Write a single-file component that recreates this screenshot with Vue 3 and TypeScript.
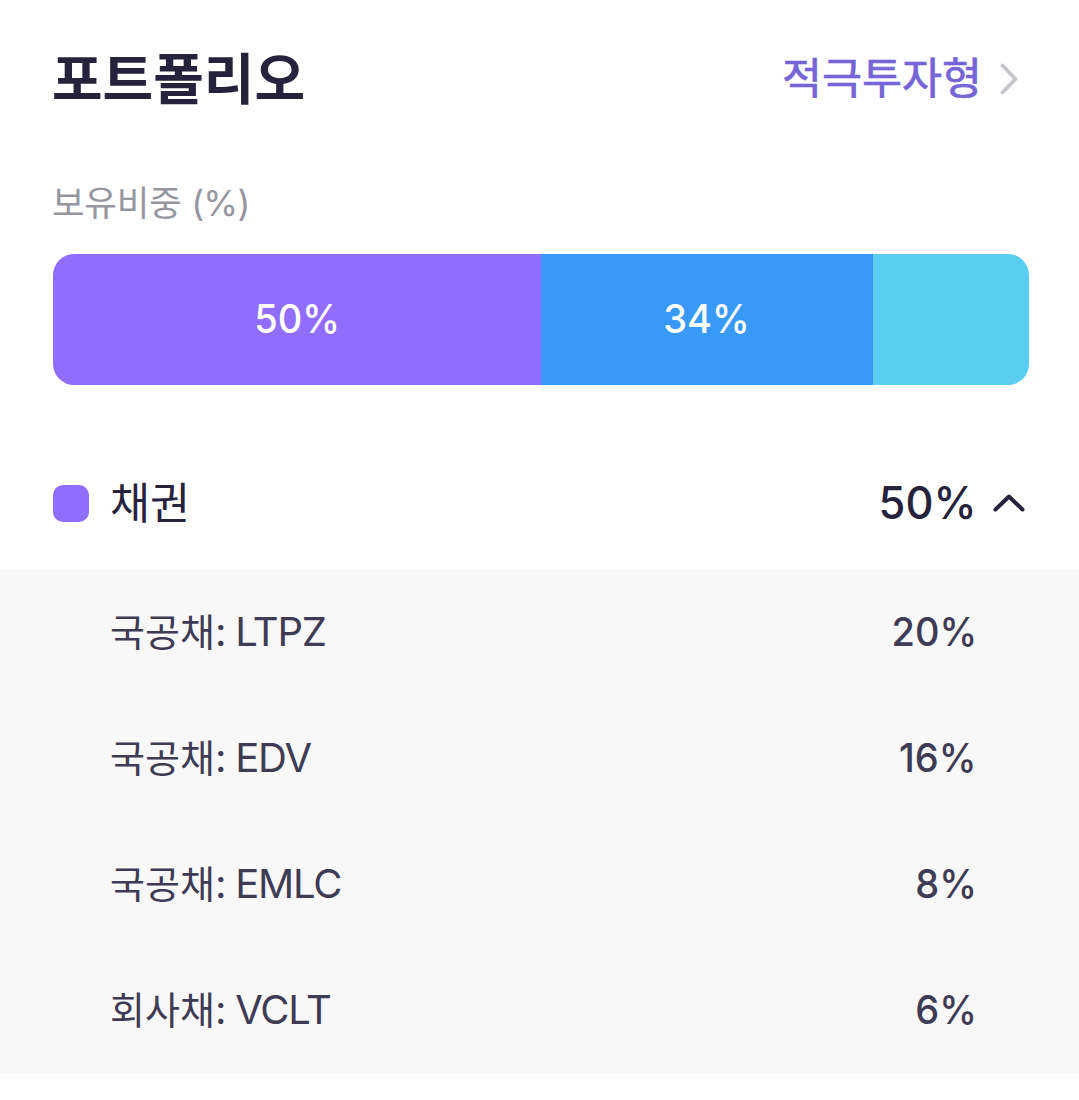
<template>
  <main class="portfolio">
    <header class="header">
      <h1 class="title">포트폴리오</h1>
      <button class="type-link" type="button">
        <span>적극투자형</span>
        <svg class="chevron-right" width="18" height="32" viewBox="0 0 18 32" fill="none">
          <path d="M2.5 2.5L15.5 16L2.5 29.5" stroke="#c6c6cb" stroke-width="3.8" stroke-linecap="round" stroke-linejoin="round" />
        </svg>
      </button>
    </header>

    <p class="caption">보유비중 <span class="unit">(%)</span></p>
    <div class="bar">
      <div v-for="item in segments" :key="item.color" class="segment"
        :style="{ width: item.width + 'px', backgroundColor: item.color }">
        <span class="segment-label">{{ item.label }}</span>
      </div>
    </div>

    <section>
      <div class="group" @click="open = !open">
        <i class="swatch"></i>
        <span class="group-name">채권</span>
        <span class="group-value">50%</span>
        <svg :class="['chevron-up', { closed: !open }]" width="32" height="20" viewBox="0 0 32 20" fill="none">
          <path d="M2.5 16.5L16 3.5L29.5 16.5" stroke="#25233c" stroke-width="4" stroke-linecap="round" stroke-linejoin="round" />
        </svg>
      </div>
      <ul v-if="open" class="list">
        <li v-for="item in holdings" :key="item.ticker" class="row">
          <span class="row-name"><span class="kind">{{ item.kind }}</span>: {{ item.ticker }}</span>
          <span class="row-value">{{ item.percent }}%</span>
        </li>
      </ul>
    </section>
  </main>
</template>

<script setup lang="ts">
import { ref } from 'vue'

interface Segment {
  label: string
  width: number
  color: string
}

interface Holding {
  kind: string
  ticker: string
  percent: number
}

const open = ref(true)

const segments: Segment[] = [
  { label: '50%', width: 488, color: '#916dfe' },
  { label: '34%', width: 332, color: '#3899f6' },
  { label: '', width: 156, color: '#59cdf2' },
]

const holdings: Holding[] = [
  { kind: '국공채', ticker: 'LTPZ', percent: 20 },
  { kind: '국공채', ticker: 'EDV', percent: 16 },
  { kind: '국공채', ticker: 'EMLC', percent: 8 },
  { kind: '회사채', ticker: 'VCLT', percent: 6 },
]
</script>

<style>
body {
  background: #fff;
}
</style>

<style scoped>
.portfolio {
  width: 1079px;
  height: 1100px;
  overflow: hidden;
  font-family: Inter, 'Noto Sans CJK KR', sans-serif;
  color: #25233c;
}

.header {
  display: flex;
  justify-content: space-between;
  align-items: center;
  height: 158px;
  padding: 0 61px 0 52px;
}

.title {
  margin: 0;
  font-size: 55px;
  font-weight: 700;
  line-height: 80px;
}

.type-link {
  display: flex;
  align-items: center;
  gap: 18px;
  padding: 0;
  border: 0;
  background: none;
  font-family: inherit;
  font-size: 43.5px;
  font-weight: 400;
  line-height: 60px;
  color: #7565d6;
  cursor: pointer;
}

.type-link span {
  padding-bottom: 2px;
  -webkit-text-stroke: 0.7px #7565d6;
}

.caption {
  margin: 20px 0 0;
  padding-left: 52px;
  font-size: 35.5px;
  line-height: 52px;
  letter-spacing: -0.3px;
  color: #96969f;
}

.unit {
  letter-spacing: -0.7px;
}

.bar {
  display: flex;
  width: 976px;
  height: 131px;
  margin: 24px 0 0 53px;
  border-radius: 21px;
  overflow: hidden;
}

.segment {
  display: flex;
  align-items: center;
  justify-content: center;
  padding-bottom: 2px;
  box-sizing: border-box;
  font-size: 40px;
  font-weight: 500;
  color: #fff;
}

.segment-label {
  transform: scaleX(0.95);
}

.group {
  display: flex;
  align-items: center;
  height: 134px;
  margin-top: 51px;
  padding: 0 54px 0 53px;
  cursor: pointer;
}

.swatch {
  width: 36px;
  height: 37px;
  border-radius: 10px;
  background: #916dfe;
}

.group-name {
  margin-left: 21px;
  padding-bottom: 5px;
  font-size: 43.5px;
}

.group-value {
  margin-left: auto;
  padding-bottom: 2px;
  font-size: 45px;
  font-weight: 500;
  transform: scaleX(0.965);
  transform-origin: right;
}

.chevron-up {
  margin-left: 16px;
}

.closed {
  transform: rotate(180deg);
}

.list {
  margin: 0;
  padding: 0;
  list-style: none;
  background: #f8f8f8;
}

.row {
  display: flex;
  align-items: center;
  justify-content: space-between;
  height: 126px;
  padding: 0 102px 0 110px;
  font-size: 40px;
  color: #3e3b54;
  box-sizing: border-box;
}

.row-name {
  padding-bottom: 7px;
  letter-spacing: -1.2px;
}

.kind {
  font-size: 38px;
  letter-spacing: 0;
}

.row-value {
  padding-bottom: 3px;
  font-weight: 500;
  transform: scaleX(0.95);
  transform-origin: right;
}
</style>
